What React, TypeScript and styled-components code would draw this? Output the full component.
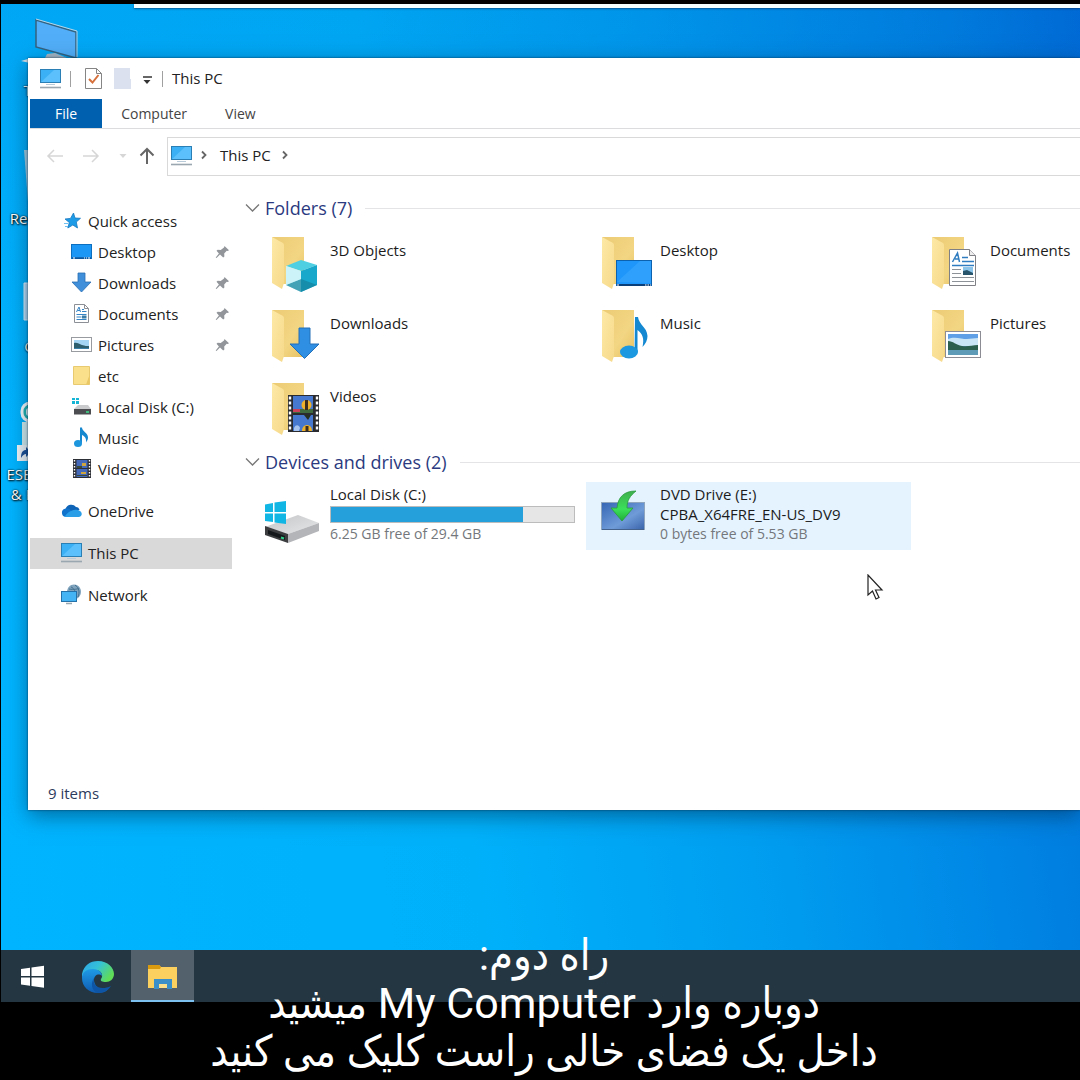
import React from 'react';
import styled, { createGlobalStyle } from 'styled-components';

const uiFont = "'Open Sans', 'Noto Sans', sans-serif";

const GlobalStyle = createGlobalStyle`
  *, *::before, *::after { box-sizing: border-box; }
  body { margin: 0; background: #000; font-family: ${uiFont}; font-size: 15px; }
  button { font: inherit; color: inherit; background: none; border: 0; padding: 0; text-align: left; }
  h2, p, ul { margin: 0; padding: 0; }
  ul { list-style: none; }
  svg { display: block; flex: none; }
`;

/* ---------- frame, desktop and taskbar ---------- */

const Frame = styled.main`
  position: relative;
  display: flex;
  flex-direction: column;
  min-height: 100vh;
  padding: 4px 0 78px 1px;
  overflow: hidden;
  background: #000;
`;

const Desktop = styled.section`
  position: relative;
  flex: 1;
  overflow: hidden;
  background:
    linear-gradient(180deg, rgba(0, 90, 190, 0.14) 0%, transparent 45%),
    linear-gradient(82deg, #00b4ff 0%, #00b1fa 40%, #00a8f5 50%, #009ef0 63%, #0090ea 75%, #007ee0 90%, #006cd8 100%);
`;

const TopStrip = styled.div`
  height: 4px;
  margin-left: 133px;
  background: #f4fdff;
  box-shadow: 0 1px 2px rgba(0, 40, 90, 0.6);
`;

const Shortcuts = styled.ul`
  display: grid;
  grid-auto-rows: 128px;
  width: 96px;
  padding-top: 6px;
`;

const Shortcut = styled.li`
  display: flex;
  flex-direction: column;
  align-items: center;
  line-height: 20px;
  color: #fff;
  text-align: center;
  text-shadow: 1px 1px 2px #000, 0 0 2px #000;
`;

const ShortcutLabel = styled.span`
  padding-top: 2px;
  white-space: pre-line;
`;

const Taskbar = styled.nav`
  display: flex;
  gap: 2px;
  height: 52px;
  background: #233641;
`;

const TaskButton = styled.button<{ $active?: boolean }>`
  display: grid;
  place-items: center;
  width: 63px;
  padding-top: 3px;
  background: ${p => (p.$active ? '#52616b' : 'transparent')};
  border-bottom: 2px solid ${p => (p.$active ? '#7cc1f0' : 'transparent')};
`;

const Caption = styled.p`
  position: absolute;
  right: 0;
  bottom: 5px;
  left: 8px;
  font-family: Roboto, 'DejaVu Sans Condensed', 'DejaVu Sans', sans-serif;
  font-size: 43px;
  line-height: 48px;
  color: #fff;
  text-align: center;
  white-space: pre-line;
  pointer-events: none;
`;

const Pointer = styled.svg`
  position: absolute;
  top: 570px;
  left: 866px;
`;

/* ---------- explorer window ---------- */

const ExplorerWindow = styled.section`
  position: absolute;
  top: 54px;
  right: 0;
  bottom: 140px;
  left: 27px;
  display: flex;
  flex-direction: column;
  overflow: hidden;
  padding-left: 2px;
  background: #fff;
`;

const WindowShadow = styled.div`
  position: absolute;
  top: 54px;
  right: 0;
  bottom: 140px;
  left: 27px;
  box-shadow: 0 0 2px rgba(0, 40, 70, 0.8), 0 6px 20px rgba(0, 40, 70, 0.5);
`;

const TitleBar = styled.header`
  display: flex;
  align-items: center;
  height: 41px;
  padding-left: 10px;
`;

const Separator = styled.span<{ $before: number; $after: number }>`
  width: 1px;
  height: 16px;
  margin: 0 ${p => p.$after}px 0 ${p => p.$before}px;
  background: #a0a0a0;
`;

const QuickTools = styled.div`
  display: flex;
  align-items: center;
  gap: 12px;
`;

const WindowTitle = styled.span`
  padding-bottom: 2px;
  color: #222;
`;

const Ribbon = styled.nav`
  display: flex;
  height: 30px;
  border-bottom: 1px solid #dcdcde;
`;

const RibbonTab = styled.button<{ $primary?: boolean }>`
  padding: 0 ${p => (p.$primary ? 25 : 19)}px;
  font-size: 14px;
  color: ${p => (p.$primary ? '#fff' : '#444')};
  background: ${p => (p.$primary ? '#0060b0' : 'transparent')};
`;

const NavBar = styled.div`
  display: flex;
  align-items: center;
  height: 54px;
  padding-left: 16px;
`;

const NavButtons = styled.div`
  display: flex;
  align-items: center;
  width: 121px;
`;

const NavButton = styled.button<{ $width: number }>`
  display: grid;
  place-items: center;
  width: ${p => p.$width}px;
  height: 24px;
`;

const AddressBar = styled.div`
  display: flex;
  flex: 1;
  align-items: center;
  height: 39px;
  padding: 0 0 2px 3px;
  border: 1px solid #d9d9d9;
  border-right: 0;
`;

const Crumb = styled.button`
  margin: 0 10px 0 12px;
  color: #222;
`;

const WindowBody = styled.div`
  display: flex;
  flex: 1;
  min-height: 0;
`;

const Sidebar = styled.nav`
  display: flex;
  flex: none;
  flex-direction: column;
  gap: 11px;
  width: 202px;
  padding-top: 23px;
`;

const TreeRow = styled.button<{ $child?: boolean; $selected?: boolean }>`
  display: flex;
  align-items: center;
  gap: 6px;
  width: 100%;
  height: 31px;
  padding: 0 2px 2px ${p => (p.$child ? 41 : 31)}px;
  color: #222;
  background: ${p => (p.$selected ? '#d9d9d9' : 'transparent')};
`;

const TreeLabel = styled.span`
  flex: 1;
  white-space: nowrap;
`;

const Content = styled.div`
  flex: 1;
  min-width: 0;
  overflow: hidden;
  padding: 12px 0 0 13px;
`;

const Group = styled.section`
  margin-bottom: 3px;
`;

const GroupHeader = styled.div`
  display: flex;
  align-items: center;
  gap: 5px;
  height: 26px;
`;

const GroupTitle = styled.h2`
  font-size: 18px;
  font-weight: 400;
  line-height: 26px;
  color: #2b3a80;
  white-space: nowrap;
`;

const GroupRule = styled.span`
  flex: 1;
  height: 1px;
  margin-left: 8px;
  background: #e4e4e6;
`;

const Tiles = styled.div<{ $top: number }>`
  display: grid;
  grid-template-columns: repeat(3, 325px);
  gap: 5px;
  padding: ${p => p.$top}px 0 0 11px;
`;

const Tile = styled.button<{ $hover?: boolean }>`
  display: flex;
  align-items: flex-start;
  gap: 2px;
  height: 68px;
  padding-left: 8px;
  background: ${p => (p.$hover ? '#e5f3ff' : 'transparent')};
`;

const TileText = styled.span<{ $top: number }>`
  display: flex;
  flex-direction: column;
  padding-top: ${p => p.$top}px;
  line-height: 20px;
  color: #1c1c1c;
  white-space: nowrap;
`;

const TileNote = styled.span`
  font-size: 14px;
  color: #74777b;
`;

const Usage = styled.progress`
  appearance: none;
  display: block;
  width: 245px;
  height: 17px;
  margin: 2px 0 1px;
  border: 1px solid #bcbcbc;
  background: #e6e6e6;
  &::-webkit-progress-bar { background: #e6e6e6; }
  &::-webkit-progress-value { background: #26a0da; }
`;

const StatusBar = styled.footer`
  height: 33px;
  padding-left: 18px;
  line-height: 32px;
  color: #2c3a5c;
`;

/* ---------- small icons ---------- */

const Small = ({ children, w = 21, h = 21 }: { children: React.ReactNode; w?: number; h?: number }) => (
  <svg width={w} height={h} viewBox={`0 0 ${w} ${h}`} aria-hidden="true">{children}</svg>
);

const PcIcon = () => (
  <Small>
    <rect x="0.5" y="1.5" width="20" height="13" fill="#3cb0f4" stroke="#2a7fb4" />
    <path d="M1 14 14 2h6v12z" fill="#6fcbff" opacity="0.6" />
    <path d="M6 16.5h9" stroke="#b9cbd8" />
    <path d="M0 19.5h21" stroke="#9aa6b0" strokeWidth="1.6" />
  </Small>
);

const StarIcon = () => (
  <Small>
    <path d="M12.500 3 14 8l5.500.3-4.200 3.700L16.500 18l-4.700-3-5 3 1.500-5.500L4 9l5.500-.6z" fill="#1e9be6" stroke="#1779c0" strokeWidth="0.8" />
    <path d="M3 13.500h4M4 16.500h3" stroke="#6ec0f2" />
  </Small>
);

const DesktopIcon = () => (
  <Small>
    <rect x="0.5" y="3.5" width="20" height="14" fill="#1c97f6" stroke="#0d6fc0" />
    <path d="M1 17h19" stroke="#0b3f78" />
    <path d="M2 17h2M13 17h1M15 17h1M17 17h2" stroke="#fff" />
  </Small>
);

const DownloadIcon = () => (
  <Small>
    <path d="M7 1h7v9h6l-9.500 10L1 10h6z" fill="#3f8fdb" stroke="#2b6fb3" strokeWidth="0.8" />
  </Small>
);

const DocumentIcon = () => (
  <Small>
    <path d="M3.500 1.500h10l4 4v14h-14z" fill="#fff" stroke="#8c9096" />
    <path d="M13.500 1.500v4h4" fill="none" stroke="#8c9096" />
    <path d="M5.500 9 8 4l1.500 5M6.500 7.500h2.500M11 6.500h2M11 8.500h4.500M5.500 11.500h10M5.500 14h5M5.500 16.500h10" fill="none" stroke="#3585c6" />
    <path d="M11 12.500h4.500v3H11z" fill="#3c7da8" />
  </Small>
);

const PictureIcon = () => (
  <Small>
    <rect x="0.5" y="3.5" width="20" height="14" fill="#fff" stroke="#989ca0" />
    <path d="M3 6h15v9H3z" fill="#a5d5f5" />
    <path d="M3 9c3-1 5 1 8 2s5 1 7 1v3H3z" fill="#2d5f6e" />
    <path d="M3 14h15v1H3z" fill="#3b80a8" />
  </Small>
);

const FolderIcon = () => (
  <Small>
    <path d="M2.500 1.500h16v18h-16z" fill="#fbe08c" stroke="#e8cb70" />
    <path d="M18.500 10v9.500H15z" fill="#e9c765" />
  </Small>
);

const DiskIcon = () => (
  <Small>
    <path d="M1 2h3v2H1zM5 2h3v2H5zM1 5h3v3H1zM5 5h3v3H5z" fill="#16b5d6" />
    <path d="M3 13 7 9h10l3 4z" fill="#c9cbcd" />
    <path d="M3 13h17v6H3z" fill="#4b4d50" />
    <path d="M3 18.500h17" stroke="#a5a7a9" />
    <path d="M15 16h3" stroke="#3be08a" strokeWidth="1.5" />
  </Small>
);

const MusicIcon = () => (
  <Small>
    <path d="M9 0.500h2c0 4 6 5 6 10 0 2-1 3.500-2 5 .5-4-1-6-4-7.500V16H9z" fill="#1688d0" />
    <ellipse cx="7" cy="16.5" rx="4" ry="3.5" fill="#1e96de" />
  </Small>
);

const FilmIcon = () => (
  <Small>
    <path d="M2 1h18v19H2z" fill="#2d2f36" />
    <path d="M3.500 2v18M18.500 2v18" stroke="#fff" strokeWidth="1.4" strokeDasharray="1.5 1.5" />
    <path d="M5.500 2h11v8h-11zM5.500 11h11v8h-11z" fill="#4469b8" />
    <path d="M11 5h4v3h-4zM10 14h5v2h-5z" fill="#d0a63c" />
    <path d="M6 8h5v2H6zM6 17h10v1H6z" fill="#38493a" />
  </Small>
);

const CloudIcon = () => (
  <Small>
    <path d="M4.500 9A6 6 0 0 1 15 7c2 0 3 1 3.500 3L10 14z" fill="#0f64b8" />
    <path d="M4.500 17A4.200 4.200 0 0 1 4 8.800c3-.8 5 .7 7 2.200l-4 6z" fill="#1173cc" />
    <path d="M3.500 17c2-4 8-8.500 13-7 5.500 1 5.500 7 1 7z" fill="#2a9fe8" />
  </Small>
);

const NetworkIcon = () => (
  <Small>
    <path d="M13 0.500c4 0 7 3 7 7.500 0 3-2 6-5 7L6 8c0-4 3-7.500 7-7.500z" fill="#7fa3bd" />
    <path d="M10 3c3 1 5 5 5 10M14 1c4 3 5 7 3 12M8 5c5 1 9 0 10-1" fill="none" stroke="#44708f" />
    <rect x="0.5" y="7.5" width="15" height="10" fill="#45b4f5" stroke="#2371a8" />
    <path d="M5 19.500h6" stroke="#9aa6b0" strokeWidth="1.5" />
  </Small>
);

const PinIcon = () => (
  <Small w={15} h={16}>
    <path d="M9.500 2 14 6.200l-1.300.8-1-.2-2.500 2.700.2 3-1.200 1L5 10.500 1.500 14l-.8-.4 3.200-4L1.500 6.800l1.200-1 3 .2L9 3.500z" fill="#92969b" />
  </Small>
);

const ChevronRight = () => (
  <Small w={8} h={10}><path d="M2 1.500 5.500 5 2 8.500" fill="none" stroke="#666" strokeWidth="1.8" /></Small>
);

const ChevronDown = () => (
  <Small w={15} h={10}><path d="M1 1.500 7.500 8 14 1.500" fill="none" stroke="#777" strokeWidth="1.3" /></Small>
);

const Arrow = ({ d, color, width }: { d: string; color: string; width: number }) => (
  <Small w={18} h={18}><path d={d} fill="none" stroke={color} strokeWidth={width} /></Small>
);

/* ---------- large tile pictures ---------- */

const Large = ({ children }: { children: React.ReactNode }) => (
  <svg width="64" height="64" viewBox="0 0 64 64" aria-hidden="true">{children}</svg>
);

const OpenFolder = ({ children }: { children: React.ReactNode }) => (
  <Large>
    <defs>
      <linearGradient id="folderBack" x1="0" y1="0" x2="1" y2="1">
        <stop offset="0" stopColor="#eccb74" /><stop offset="0.6" stopColor="#f3d683" /><stop offset="1" stopColor="#e6c163" />
      </linearGradient>
      <linearGradient id="folderFlap" x1="0" y1="0" x2="1" y2="1">
        <stop offset="0" stopColor="#fde9a6" /><stop offset="1" stopColor="#f6d98a" />
      </linearGradient>
    </defs>
    <path d="M8 5h32v47H18z" fill="url(#folderBack)" />
    <path d="M8 5l11 6q1 1 1 2v38l-2 6-10-6z" fill="url(#folderFlap)" />
    {children}
  </Large>
);

const Objects3D = () => (
  <OpenFolder>
    <path d="M22 34 37 28l16 5-16 6z" fill="#4fd0e2" />
    <path d="M22 34l15 5v21l-15-7z" fill="#b5eef4" />
    <path d="M37 39l16-6v20l-16 7z" fill="#18a8cc" />
    <path d="M22 53l15-6 16 6-16 7z" fill="#14829c" opacity="0.7" />
    <path d="M22 34l15 5v8l-15 6z" fill="#d5f7f9" opacity="0.7" />
  </OpenFolder>
);

const DesktopFolder = () => (
  <OpenFolder>
    <rect x="22.5" y="28.5" width="35" height="25" fill="#1e96fa" stroke="#0c62ae" />
    <path d="M23 50 46 29h11v22z" fill="#3aa8ff" opacity="0.6" />
    <path d="M23 53h34" stroke="#0a3f7a" strokeWidth="2" />
    <path d="M23 53h2M51 53h1.500M53.500 53h1.500M56 53h1" stroke="#fff" />
  </OpenFolder>
);

const DocumentsFolder = () => (
  <OpenFolder>
    <path d="M25.500 17.500h20l6 6v30h-26z" fill="#fff" stroke="#7f7f86" />
    <path d="M45.500 17.500v6h6" fill="#eee" stroke="#7f7f86" />
    <path d="M28.500 30 33.500 21l2 9M31 27h4M38 25.500h6M38 29.500h12M28 33.500h22" fill="none" stroke="#2f7dc0" strokeWidth="1.5" />
    <path d="M28 37.500h9M28 41.500h9M28 45.500h22M28 49.500h22" stroke="#8d9298" />
    <path d="M39 35h10v8H39z" fill="#8cc4ea" /><path d="M39 39l4-1 6 3v2H39z" fill="#28556c" />
  </OpenFolder>
);

const DownloadsFolder = () => (
  <OpenFolder>
    <path d="M35 23h11v16h9L40.500 53.500 26 39h9z" fill="#2f8fe2" stroke="#2470b8" />
  </OpenFolder>
);

const MusicFolder = () => (
  <OpenFolder>
    <path d="M41 12h3c1 8 9 10 9.500 19 0 4-2 8-5 11 2-9 0-13-5-17v22h-3z" fill="#1489d2" />
    <ellipse cx="35" cy="47" rx="9" ry="6.5" fill="#1c98e0" />
  </OpenFolder>
);

const PicturesFolder = () => (
  <OpenFolder>
    <rect x="21.5" y="26.5" width="35" height="26" fill="#fff" stroke="#8c8c94" />
    <path d="M24 29h30v21H24z" fill="#5f9fe6" />
    <path d="M24 34c6-3 14 0 19 0l11-1v8H24z" fill="#c9e5f6" />
    <path d="M24 36c5 0 8 4 14 5s10-1 16-1v5H24z" fill="#2d5f4e" />
    <path d="M24 45h30v5H24z" fill="#5e9bb6" />
  </OpenFolder>
);

const VideosFolder = () => (
  <OpenFolder>
    <path d="M24 17h31v37H24z" fill="#2a2b2e" />
    <path d="M26 18.500v35M53 18.500v35" stroke="#fff" strokeWidth="2.4" strokeDasharray="3 2" />
    <path d="M29 18h20v17H29zM29 37h20v16H29z" fill="#4778cf" />
    <path d="M29 31h20v4H29z" fill="#3f6a3d" />
    <path d="M29 31h7v3h-7z" fill="#c9405a" />
    <ellipse cx="42.5" cy="27" rx="5" ry="5" fill="#edb12b" /><path d="M41 22h3v10h-3z" fill="#3a2c1e" />
    <path d="M40 37h7l-3 5z" fill="#27301f" />
    <path d="M38 53c0-8 10-8 10 0z" fill="#edb12b" /><path d="M41.500 48h3v5h-3z" fill="#3a2c1e" />
    <path d="M30 50c2-4 5-3 6 0l-1 3h-5z" fill="#a7c4ef" />
  </OpenFolder>
);

const LocalDiskPicture = () => (
  <Large>
    <defs>
      <linearGradient id="diskTop" x1="0" y1="0" x2="1" y2="1">
        <stop offset="0" stopColor="#c3c5c7" /><stop offset="1" stopColor="#e6e7e8" />
      </linearGradient>
    </defs>
    <path d="M1 45 34 33l21 8-31 11z" fill="url(#diskTop)" />
    <path d="M1 44l23 8v9L1 53z" fill="#3b3d3f" />
    <path d="M24 52l31-11v8L24 61z" fill="#b3b5b8" />
    <path d="M4 48l17 6v4L4 52z" fill="#15181a" />
    <path d="M17 55.500l3 1" stroke="#2fd08a" strokeWidth="2" />
    <path d="M1 22.500 9 21v9H1zM10.500 20.500 22 19v11H10.500zM1 31.500h8v8.500l-8-1zM10.500 31.500H22V42l-11.500-1.500z" fill="#12b6e4" />
  </Large>
);

const DvdPicture = () => (
  <Large>
    <defs>
      <linearGradient id="dvdScreen" x1="0" y1="0" x2="1" y2="1">
        <stop offset="0" stopColor="#3565b4" /><stop offset="0.6" stopColor="#6f9bd8" /><stop offset="1" stopColor="#3a63aa" />
      </linearGradient>
      <linearGradient id="dvdArrow" x1="0" y1="0" x2="0" y2="1">
        <stop offset="0" stopColor="#3fae4c" /><stop offset="0.6" stopColor="#3be05a" /><stop offset="1" stopColor="#1fae38" />
      </linearGradient>
    </defs>
    <rect x="7.500" y="20.500" width="43" height="27" fill="url(#dvdScreen)" stroke="#8fa4bd" />
    <path d="M8 47.500h42" stroke="#44618c" />
    <path d="M42 9c-12 0-18 6-19 17h-6l11 13 11-13h-6c0-8 3-12 9-17z" fill="url(#dvdArrow)" stroke="#2b9a3d" strokeWidth="0.8" />
  </Large>
);

/* ---------- desktop shortcut pictures ---------- */

const PcShortcutPicture = () => (
  <Large>
    <path d="M19 6l40 12v26L19 33z" fill="#52aef8" stroke="#35627f" strokeWidth="1.5" />
    <path d="M19 5l41 12v26" fill="none" stroke="#b9d5e6" />
    <path d="M30 40l8-1 12 5H28z" fill="#a9b6c2" />
    <path d="M4 47l10-3 12 4v4z" fill="#d4dde4" />
  </Large>
);

const BinPicture = () => <Large><path d="M7 8h50l-6 52H11z" fill="#a9cfe0" /></Large>;
const SheetPicture = () => <Large><path d="M7 13h50v37H7z" fill="#b9d9f2" stroke="#e3f1fb" /></Large>;
const EsetPicture = () => (
  <Large>
    <rect x="5" y="5" width="54" height="18" rx="8" fill="#23b5b0" stroke="#fff" strokeWidth="3" />
    <rect x="9" y="10" width="40" height="8" rx="3" fill="#e8f8f8" />
    <rect x="5" y="24" width="52" height="26" fill="#d9f1f1" />
    <path d="M0 47h17v16H0z" fill="#f3f6f8" />
    <path d="M4 60c0-6 2-8 5-8v-3l5 5-5 5v-3c-2 0-3 1-5 4z" fill="#1e4f96" />
  </Large>
);

/* ---------- data ---------- */

const pinned = [
  { name: 'Desktop', Icon: DesktopIcon, pin: true },
  { name: 'Downloads', Icon: DownloadIcon, pin: true },
  { name: 'Documents', Icon: DocumentIcon, pin: true },
  { name: 'Pictures', Icon: PictureIcon, pin: true },
  { name: 'etc', Icon: FolderIcon },
  { name: 'Local Disk (C:)', Icon: DiskIcon },
  { name: 'Music', Icon: MusicIcon },
  { name: 'Videos', Icon: FilmIcon },
];

const roots = [
  { name: 'OneDrive', Icon: CloudIcon },
  { name: 'This PC', Icon: PcIcon, selected: true },
  { name: 'Network', Icon: NetworkIcon },
];

const folders = [
  { name: '3D Objects', Picture: Objects3D },
  { name: 'Desktop', Picture: DesktopFolder },
  { name: 'Documents', Picture: DocumentsFolder },
  { name: 'Downloads', Picture: DownloadsFolder },
  { name: 'Music', Picture: MusicFolder },
  { name: 'Pictures', Picture: PicturesFolder },
  { name: 'Videos', Picture: VideosFolder },
];

const shortcuts = [
  { name: 'This PC', Picture: PcShortcutPicture },
  { name: 'Recycle Bin', Picture: BinPicture },
  { name: 'Google', Picture: SheetPicture },
  { name: 'ESET Bankin\n& Payment', Picture: EsetPicture },
];

const GroupHeading = ({ children }: { children: string }) => (
  <GroupHeader>
    <ChevronDown />
    <GroupTitle>{children}</GroupTitle>
    <GroupRule />
  </GroupHeader>
);

const Explorer = () => (
  <ExplorerWindow aria-label="This PC">
    <TitleBar>
      <PcIcon />
      <Separator $before={9} $after={14} />
      <QuickTools>
        <button aria-label="Properties">
          <Small w={17} h={21}>
            <path d="M0.500 0.500h11l5 5v15h-16z" fill="#fff" stroke="#858585" />
            <path d="M11.500 0.500v5h5" fill="none" stroke="#858585" />
            <path d="M4 11l3.500 3.500L13.500 7" fill="none" stroke="#d5703c" strokeWidth="2" />
          </Small>
        </button>
        <button aria-label="New folder">
          <Small w={17} h={21}>
            <path d="M0 0h16v11h1v10H0z" fill="#dbe1ef" />
          </Small>
        </button>
        <button aria-label="Customize toolbar">
          <Small w={9} h={11}><path d="M0 4h9" stroke="#333" strokeWidth="1.5" /><path d="M0.500 7h7L4 11z" fill="#333" /></Small>
        </button>
      </QuickTools>
      <Separator $before={10} $after={9} />
      <WindowTitle>This PC</WindowTitle>
    </TitleBar>
    <Ribbon>
      <RibbonTab $primary>File</RibbonTab>
      <RibbonTab>Computer</RibbonTab>
      <RibbonTab>View</RibbonTab>
    </Ribbon>
    <NavBar>
      <NavButtons>
        <NavButton $width={18} aria-label="Back"><Arrow d="M17 9H2M8 3 2 9l6 6" color="#d6d6d6" width={1.5} /></NavButton>
        <NavButton $width={57} aria-label="Forward"><Arrow d="M1 9h15M10 3l6 6-6 6" color="#d6d6d6" width={1.5} /></NavButton>
        <NavButton $width={8} aria-label="Recent locations"><Small w={8} h={6}><path d="M0.500 1h7L4 5z" fill="#d6d6d6" /></Small></NavButton>
        <NavButton $width={42} aria-label="Up"><Arrow d="M9 17V2M2.500 8.500 9 2l6.500 6.500" color="#666" width={2} /></NavButton>
      </NavButtons>
      <AddressBar>
        <PcIcon />
        <Small w={8} h={10}>{null}</Small>
        <ChevronRight />
        <Crumb>This PC</Crumb>
        <ChevronRight />
      </AddressBar>
    </NavBar>
    <WindowBody>
      <Sidebar aria-label="Locations">
        <div>
          <TreeRow><StarIcon /><TreeLabel>Quick access</TreeLabel></TreeRow>
          {pinned.map(({ name, Icon, pin }) => (
            <TreeRow key={name} $child><Icon /><TreeLabel>{name}</TreeLabel>{pin && <PinIcon />}</TreeRow>
          ))}
        </div>
        {roots.map(({ name, Icon, selected }) => (
          <TreeRow key={name} $selected={selected}><Icon /><TreeLabel>{name}</TreeLabel></TreeRow>
        ))}
      </Sidebar>
      <Content>
        <Group>
          <GroupHeading>Folders (7)</GroupHeading>
          <Tiles $top={11}>
            {folders.map(({ name, Picture }) => (
              <Tile key={name}><Picture /><TileText $top={8}>{name}</TileText></Tile>
            ))}
          </Tiles>
        </Group>
        <Group>
          <GroupHeading>Devices and drives (2)</GroupHeading>
          <Tiles $top={7}>
            <Tile>
              <LocalDiskPicture />
              <TileText $top={2}>
                <span>Local Disk (C:)</span>
                <Usage aria-label="Used space" value={79} max={100} />
                <TileNote>6.25 GB free of 29.4 GB</TileNote>
              </TileText>
            </Tile>
            <Tile $hover>
              <DvdPicture />
              <TileText $top={2}>
                <span>DVD Drive (E:)</span>
                <span>CPBA_X64FRE_EN-US_DV9</span>
                <TileNote>0 bytes free of 5.53 GB</TileNote>
              </TileText>
            </Tile>
          </Tiles>
        </Group>
      </Content>
    </WindowBody>
    <StatusBar>9 items</StatusBar>
  </ExplorerWindow>
);

export default function App() {
  return (
    <>
      <GlobalStyle />
      <Frame>
        <Desktop>
          <TopStrip />
          <Shortcuts>
            {shortcuts.map(({ name, Picture }) => (
              <Shortcut key={name}><Picture /><ShortcutLabel>{name}</ShortcutLabel></Shortcut>
            ))}
          </Shortcuts>
          <WindowShadow />
          <Explorer />
          <Pointer width="17" height="26" viewBox="0 0 17 26" aria-hidden="true">
            <path d="M1 1v20l4.500-4 3.500 8 3-1.500L8.500 16H15z" fill="#fff" stroke="#222" strokeWidth="1.2" />
          </Pointer>
        </Desktop>
        <Taskbar aria-label="Taskbar">
          <TaskButton aria-label="Start">
            <Small w={23} h={24}>
              <path d="M0 4 9 2.700V11H0zM10.500 2.500 23 0.800V11H10.500zM0 12.500h9v8.300L0 19.500zM10.500 12.500H23v10.200l-12.500-1.700z" fill="#fff" />
            </Small>
          </TaskButton>
          <TaskButton aria-label="Edge">
            <Small w={34} h={34}>
              <defs>
                <linearGradient id="edgeTop" x1="0" y1="0" x2="1" y2="0.5">
                  <stop offset="0" stopColor="#2ba3e8" /><stop offset="0.5" stopColor="#35c1d8" /><stop offset="1" stopColor="#5fdc58" />
                </linearGradient>
                <linearGradient id="edgeSide" x1="0" y1="0" x2="0" y2="1">
                  <stop offset="0" stopColor="#1f9be6" /><stop offset="1" stopColor="#0f5bb0" />
                </linearGradient>
              </defs>
              <path d="M1 14C3 5 9 1 17 1c10 0 16 7 16 13 0 5-4 8-8 8-4 0-6-1-5-3 3-4 0-9-6-9-6 0-11 3-13 8z" fill="url(#edgeTop)" />
              <path d="M1 18c0-6 5-9 11-9 5 0 9 3 9 7-3-3-8-1-8 4 0 6 6 11 14 9-2 3-6 4-10 4C7 33 1 26 1 18z" fill="url(#edgeSide)" />
              <path d="M13 18c-2 8 6 13 17 8-3 5-8 7-13 7-6-2-8-9-4-15z" fill="#0e55a5" />
            </Small>
          </TaskButton>
          <TaskButton $active aria-label="File Explorer">
            <Small w={29} h={26}>
              <path d="M0 1h11l2 2h16v21H0z" fill="#fbd05f" />
              <path d="M0 1h11l2 2-1 2H0z" fill="#d99a10" />
              <path d="M6 15h18v10h-5v-5h-8v5H6z" fill="#3a8fc8" />
              <path d="M11 20h8v4h-8z" fill="#fbe08c" />
            </Small>
          </TaskButton>
        </Taskbar>
        <Caption dir="rtl" lang="fa">{'راه دوم:\nدوباره وارد My Computer میشید\nداخل یک فضای خالی راست کلیک می کنید'}</Caption>
      </Frame>
    </>
  );
}
